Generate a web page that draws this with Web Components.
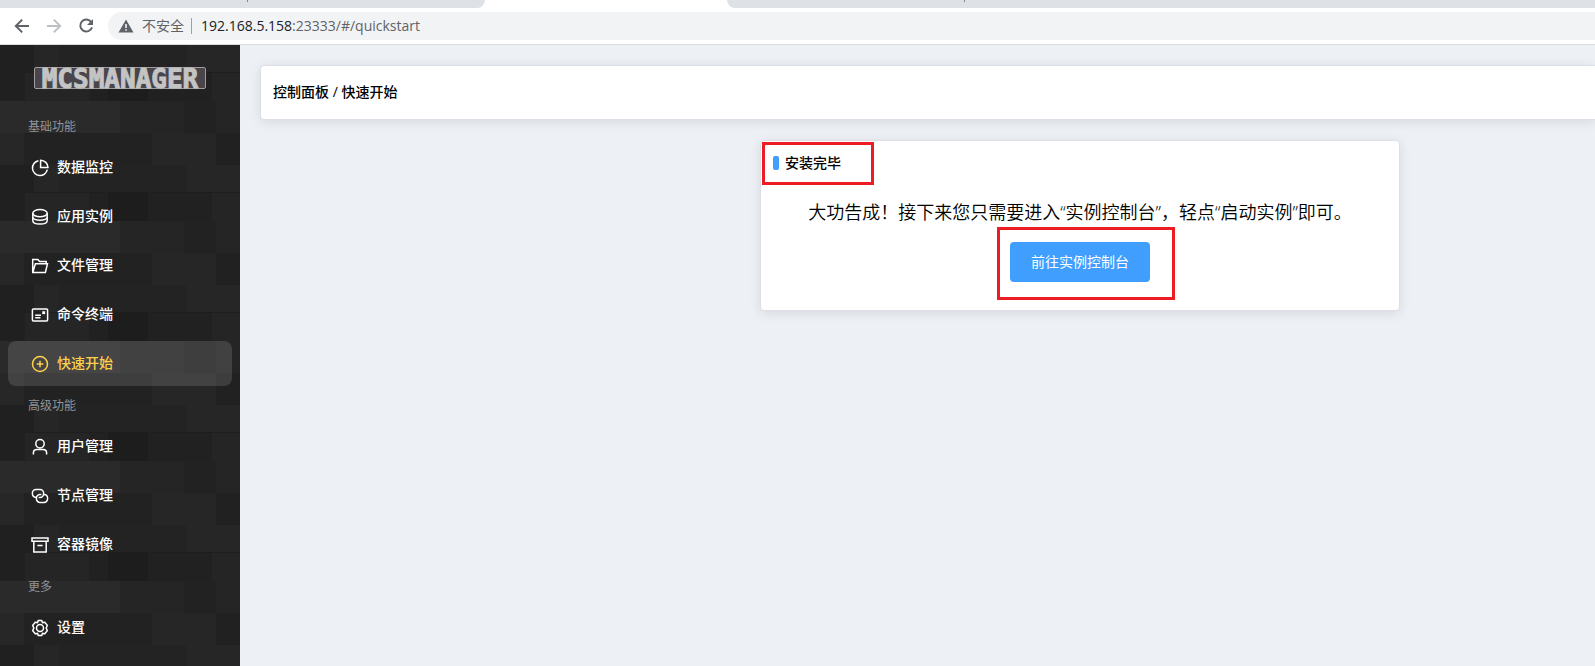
<!DOCTYPE html>
<html lang="zh-CN">
<head>
<meta charset="utf-8">
<title>MCSManager</title>
<style>
  html, body { margin: 0; height: 100%; }
  body { font-family: "Open Sans", "Noto Sans CJK SC", sans-serif; font-size: 14px; color: #000; overflow: hidden; }
</style>
</head>
<body>
<mcs-app></mcs-app>

<script>
const define = (name, html) => customElements.define(name, class extends HTMLElement {
  constructor() {
    super();
    this.attachShadow({ mode: "open" }).innerHTML = html;
  }
});

const ICONS = {
  pie: '<path d="M7.4 1.7A7.5 7.5 0 1 0 16.3 10.6"/><path d="M9.6 1.2V8.6H17A7.5 7.5 0 0 0 9.6 1.2Z"/>',
  coin: '<ellipse cx="9" cy="5.2" rx="7.2" ry="3.6"/><path d="M1.8 5.2V8.8C1.8 10.8 5 12.3 9 12.3s7.2-1.5 7.2-3.5V5.2M1.8 9V12.4C1.8 14.6 5 16 9 16s7.2-1.4 7.2-3.6V9"/>',
  folder: '<path d="M15.2 6.6V4.4H8.6L6.8 2.4H1.7V15.4H14.4L16.5 6.8H4.4L1.9 15"/>',
  card: '<rect x="1.4" y="3" width="15.2" height="12" rx="1"/><path d="M4.2 9.2H10M4.2 11.8H9.4"/><rect x="12" y="6" width="1.4" height="1.4"/>',
  plus: '<circle cx="9" cy="9" r="7.5"/><path d="M9 5.7V12.3M5.7 9H12.3"/>',
  user: '<circle cx="9" cy="5.8" r="4.2"/><path d="M2.4 16.6V15C2.4 12.8 3.9 11.6 6 11.6H12C14.1 11.6 15.6 12.8 15.6 15V16.6"/>',
  link: '<path d="M5 10.4A3.8 3.8 0 0 1 1.4 6.6V6A3.6 3.6 0 0 1 5 2.4H9A3.6 3.6 0 0 1 12.6 6V6.8A3.6 3.6 0 0 1 9 10.4H7.6"/><path d="M13 7.4A3.8 3.8 0 0 1 16.6 11.2V11.8A3.6 3.6 0 0 1 13 15.4H9A3.6 3.6 0 0 1 5.4 11.8V11A3.6 3.6 0 0 1 9 7.4H10.4"/>',
  box: '<path d="M1 2H17V5.2H1Z"/><path d="M2.8 5.4V16H15.2V5.4M6.4 9.6H11.6"/>',
  gear: '<path d="M7.3 1.5H10.7L11.5 3.6 13.8 3.3 16.3 6.4 15.2 9 16.3 11.6 13.8 14.7 11.5 14.4 10.7 16.5H7.3L6.5 14.4 4.2 14.7 1.7 11.6 2.8 9 1.7 6.4 4.2 3.3 6.5 3.6Z"/><circle cx="9" cy="9" r="3.5"/>'
};

define("browser-bar", `
  <style>
    :host { display: block; background: #fff; border-bottom: 1px solid #d9dbde; }
    .tabs { display: grid; grid-template-columns: 485fr 242fr 868fr; height: 8px; }
    .tab { background: #dee1e6; }
    .tab { display: grid; }
    .tab::before { content: ""; width: 1px; height: 2px; background: #80868b; }
    .tab.left { grid-template-columns: 247fr 238fr; border-bottom-right-radius: 8px; }
    .tab.right { grid-template-columns: 237fr 631fr; border-bottom-left-radius: 8px; }
    .tab::before { grid-column: 2; }
    .row { display: flex; align-items: center; padding: 4px 0; }
    button { border: 0; background: none; padding: 0; width: 32px; height: 28px; display: grid; place-items: center; color: #5f6368; }
    button:disabled { color: #bdc1c6; }
    nav { display: flex; padding: 0 6px; }
    svg { display: block; fill: none; stroke: currentColor; stroke-width: 2; }
    .address { flex: 1; display: flex; align-items: center; height: 28px; border-radius: 14px 0 0 14px; background: #f1f3f4; padding-left: 10px; color: #5f6368; line-height: 26px; }
    .warn { fill: currentColor; stroke: none; margin-right: 8px; }
    .sep { width: 1px; height: 16px; background: #9aa0a6; margin: 0 9px 0 7px; }
    .url b { font-weight: 400; color: #202124; }
  </style>
  <div class="tabs"><div class="tab left"></div><div></div><div class="tab right"></div></div>
  <div class="row">
    <nav>
      <button aria-label="后退"><svg width="16" height="16"><path d="M15 8H2M8.2 1.6 1.8 8 8.2 14.4"/></svg></button>
      <button aria-label="前进" disabled><svg width="16" height="16"><path d="M1 8H14M7.8 1.6 14.2 8 7.8 14.4"/></svg></button>
      <button aria-label="刷新"><svg width="16" height="16"><path d="M13.3 4.2A6 6 0 1 0 14 9.4"/><path d="M15 1V7H9Z" fill="currentColor" stroke="none"/></svg></button>
    </nav>
    <div class="address">
      <svg class="warn" width="16" height="16"><path fill-rule="evenodd" d="M8 1.5 15.5 14.5H.5ZM7.2 6V10H8.8V6ZM7.2 11.2V12.8H8.8V11.2Z"/></svg>
      <span>不安全</span><i class="sep"></i>
      <span class="url"><b>192.168.5.158</b>:23333/#/quickstart</span>
    </div>
  </div>`);

define("menu-group", `
  <style>
    :host { display: block; }
    h2 { margin: 0; padding: 2px 0 0 28px; font-size: 12px; font-weight: 400; line-height: 32px; color: #909399; }
  </style>
  <h2><slot name="label"></slot></h2>
  <slot></slot>`);

customElements.define("menu-item", class extends HTMLElement {
  constructor() {
    super();
    this.attachShadow({ mode: "open" }).innerHTML = `
      <style>
        :host { display: block; padding: 2px 8px; }
        a { box-sizing: border-box; display: flex; align-items: center; gap: 8px; height: 45px; padding-left: 23px; border-radius: 8px; color: #fff; text-decoration: none; font-weight: 500; }
        span { padding-bottom: 3px; }
        :host([active]) a { color: #ffd04b; background: rgba(255, 255, 255, .13); }
        svg { fill: none; stroke: currentColor; stroke-width: 1.5; }
      </style>
      <a href="#/${this.getAttribute("icon")}"><svg width="18" height="18">${ICONS[this.getAttribute("icon")]}</svg><span><slot></slot></span></a>`;
  }
});

const TEXTURE = `<svg xmlns='http://www.w3.org/2000/svg' width='240' height='120' shape-rendering='crispEdges'>
  <path fill='#252525' d='M0 0h240v120H0z'/>
  <path fill='#2a2a2a' d='M0 0h120v32H0z'/><path fill='#222' d='M184 0h32v32h-32z'/>
  <path fill='#272727' d='M0 32h24v32H0z'/><path fill='#222' d='M24 32h128v32H24z'/><path fill='#262626' d='M152 32h64v32h-64z'/><path fill='#212121' d='M216 32h24v32h-24z'/>
  <path fill='#202020' d='M0 64h34v27H0z'/><path fill='#262626' d='M34 64h24v27H34z'/><path fill='#232323' d='M58 64h128v27H58z'/><path fill='#262626' d='M186 64h54v27h-54z'/>
  <path fill='#202020' d='M0 91h25v29H0z'/><path fill='#212121' d='M89 91h19v29H89z'/><path fill='#1d1d1d' d='M108 91h40v29h-40z'/><path fill='#212121' d='M148 91h64v29h-64z'/>
  <path fill='#1e1e1e' d='M0 91h240v1H0z'/>
</svg>`;

define("side-menu", `
  <style>
    :host { display: block; background: #242424 0 56px / 240px 120px url("data:image/svg+xml,${encodeURIComponent(TEXTURE).replace(/'/g, "%27")}"); }
    header { display: flex; justify-content: center; padding: 22px 0 20px; }
    .logo { box-sizing: border-box; width: 172px; height: 22px; border: 1px solid #a09ca0; border-radius: 2px; background: #4a454b; color: #c4c4c4;
      display: flex; align-items: center; justify-content: center; font: bold 26px/20px "DejaVu Sans Mono", monospace; padding-top: 2px; -webkit-text-stroke: 1px #c4c4c4; }
  </style>
  <header><div class="logo">MCSMANAGER</div></header>
  <nav>
    <menu-group><span slot="label">基础功能</span>
      <menu-item icon="pie">数据监控</menu-item>
      <menu-item icon="coin">应用实例</menu-item>
      <menu-item icon="folder">文件管理</menu-item>
      <menu-item icon="card">命令终端</menu-item>
      <menu-item icon="plus" active>快速开始</menu-item>
    </menu-group>
    <menu-group><span slot="label">高级功能</span>
      <menu-item icon="user">用户管理</menu-item>
      <menu-item icon="link">节点管理</menu-item>
      <menu-item icon="box">容器镜像</menu-item>
    </menu-group>
    <menu-group><span slot="label">更多</span>
      <menu-item icon="gear">设置</menu-item>
    </menu-group>
  </nav>`);

define("panel-card", `
  <style>
    :host { display: block; box-sizing: border-box; background: #fff; border: 1px solid #dcdfe6; border-radius: 4px; box-shadow: 0 2px 12px rgba(0, 0, 0, .1); }
  </style>
  <slot></slot>`);

define("quick-start", `
  <style>
    :host { display: block; padding: 20px 0 0 20px; background: #edf0f5; }
    .crumb { padding: 15px 12px 17px; line-height: 21px; font-weight: 500; border-right: 0; border-radius: 4px 0 0 4px; }
    .row { display: grid; grid-template-columns: 500fr 640fr 195fr; margin-top: 20px; }
    .done { grid-column: 2; padding: 12px 12px 28px; }
    h1 { position: relative; display: flex; align-items: center; gap: 6px; margin: 0; font-size: 14px; line-height: 20px; font-weight: 500; }
    h1::before { content: ""; width: 6px; height: 14px; border-radius: 2px; background: #409eff; }
    p { margin: 27px 0 17px; font-size: 18px; line-height: 25px; font-weight: 350; text-align: center; white-space: nowrap; }
    .action { position: relative; width: 140px; margin: 0 auto; }
    button { display: block; width: 100%; height: 40px; border: 0; border-radius: 4px; background: #409eff; color: #fff; font: inherit; padding: 0 0 2px; }
    .mark { position: absolute; border: 3px solid #ed1c24; pointer-events: none; }
    h1 .mark { inset: -11px auto -12px -11px; width: 106px; }
    .action .mark { inset: -15px -25px -18px -13px; }
  </style>
  <panel-card class="crumb">控制面板 / 快速开始</panel-card>
  <div class="row">
    <panel-card class="done">
      <h1>安装完毕<span class="mark"></span></h1>
      <p>大功告成！接下来您只需要进入“实例控制台”，轻点“启动实例”即可。</p>
      <div class="action"><button>前往实例控制台</button><span class="mark"></span></div>
    </panel-card>
  </div>`);

define("mcs-app", `
  <style>
    :host { display: flex; flex-direction: column; height: 100vh; }
    .body { flex: 1; display: grid; grid-template-columns: 240px 1fr; min-height: 0; }
  </style>
  <browser-bar></browser-bar>
  <div class="body"><side-menu></side-menu><quick-start></quick-start></div>`);
</script>
</body>
</html>
